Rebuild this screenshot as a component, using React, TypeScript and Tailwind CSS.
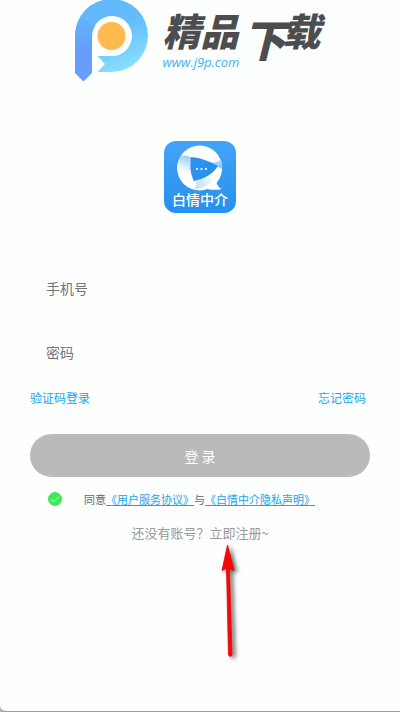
import { useState } from 'react';

function SiteLogo() {
  return (
    <svg className="h-[82px] w-[73px] shrink-0" viewBox="0 0 73 82" aria-hidden="true">
      <defs>
        <linearGradient id="bowl" x1="0.2" y1="0" x2="0.6" y2="1">
          <stop offset="0" stopColor="#5fb6fb" />
          <stop offset="0.45" stopColor="#65bcfb" />
          <stop offset="1" stopColor="#86e0ff" />
        </linearGradient>
        <linearGradient id="stem" x1="0" y1="0" x2="0" y2="1">
          <stop offset="0" stopColor="#62b5fb" />
          <stop offset="0.5" stopColor="#669efa" />
          <stop offset="1" stopColor="#6a9df8" />
        </linearGradient>
      </defs>
      <path
        d="M0 36.5A36.5 36.5 0 1 1 36.5 72H22.5L30 64L22.5 56H36.5A20 20 0 1 0 17 36V40H0Z"
        fill="url(#bowl)"
      />
      <path d="M0 36.5C0 29 2 23 6 17L20 26C18 29 17 32 17 36V73L8.5 81.5L0 73Z" fill="url(#stem)" />
      <circle cx="36.5" cy="36" r="14" fill="#ffb94f" />
    </svg>
  );
}

function SiteHeader() {
  return (
    <header className="flex justify-center gap-3.5 pr-1">
      <SiteLogo />
      <div className="flex items-start pt-2.5 text-[38px] leading-10 font-black text-[#4d4d4f] italic">
        <div className="flex w-20 flex-col gap-1">
          <span>精品</span>
          <a
            href="#site"
            className="font-['Open_Sans',sans-serif] text-[13px] leading-4 font-medium text-[#45b2ee]"
          >
            www.j9p.com
          </a>
        </div>
        <span className="w-10 text-[44px] leading-14">下</span>
        <span>载</span>
      </div>
    </header>
  );
}

function AppIcon() {
  return (
    <div className="mx-auto mt-[59px] flex size-[72px] flex-col items-center rounded-xl bg-linear-to-b from-[#43a3f8] to-[#2590ee]">
      <svg className="h-[50px] w-[72px] shrink-0" viewBox="0 0 72 50" aria-hidden="true">
        <defs>
          <linearGradient id="foldTop" x1="1" y1="0.6" x2="0.1" y2="0">
            <stop offset="0" stopColor="#8fc8fb" />
            <stop offset="0.7" stopColor="#ffffff" />
          </linearGradient>
          <linearGradient id="foldLeft" x1="0.5" y1="0" x2="0.3" y2="1">
            <stop offset="0" stopColor="#9bcffb" />
            <stop offset="0.5" stopColor="#ffffff" />
          </linearGradient>
          <linearGradient id="foldBottom" x1="0" y1="1" x2="0.7" y2="0.3">
            <stop offset="0" stopColor="#b5dcfd" />
            <stop offset="1" stopColor="#ffffff" />
          </linearGradient>
        </defs>
        <circle cx="35.7" cy="27" r="22.5" fill="#fff" />
        <path d="M52 40C53 44 55 47 58 48C52 49.5 46 49 40 47Z" fill="#fff" />
        <path d="M17 15C21 14 25 15 28 17C26 24 27 34 30 40V48C20 46 13 37 13.4 26C13.5 22 15 18 17 15Z" fill="url(#foldLeft)" />
        <path d="M28 16C36 17 43 21 48 21.5C52 21.5 55 20 57 18C58 22 58 25 58 28L54 26Z" fill="url(#foldTop)" />
        <path d="M54 25C50 33 40 38 31 40C33 43 32 46 30 48C45 47 54 37 54 25Z" fill="url(#foldBottom)" />
        <path d="M27 16C38 17 47 21 54 25C49 33 40 38 30 40C26 33 26 24 27 16Z" fill="#2b91ee" />
        <g fill="#fff">
          <circle cx="33" cy="28" r="1.1" />
          <circle cx="37.5" cy="28" r="1.1" />
          <circle cx="42" cy="28" r="1.1" />
        </g>
      </svg>
      <span className="text-sm leading-4 font-medium whitespace-nowrap text-white">白情中介</span>
    </div>
  );
}

function PointerArrow() {
  return (
    <svg
      className="pointer-events-none absolute top-0 left-1/2 ml-4 h-[122px] w-8 overflow-visible drop-shadow-[3px_2px_2px_rgba(0,0,0,0.6)]"
      viewBox="0 0 32 122"
      aria-hidden="true"
    >
      <path
        d="M11.5 2L18 27.5L13.5 25.5L16 112Q14.5 115 12.5 112L10.5 25.5L6 27.5Z"
        fill="#fb0505"
        stroke="#e00808"
        strokeWidth="0.8"
      />
    </svg>
  );
}

export default function App() {
  const [agreed, setAgreed] = useState(true);

  return (
    <div className="bg-[#b5b5b5]">
      <div className="flex min-h-screen flex-col rounded-bl-md border-b border-[#9b9b9b] bg-[#fdfefe] font-['Noto_Sans_CJK_SC',sans-serif]">
        <SiteHeader />

        <main>
          <AppIcon />

          <form className="mt-[55px] px-[30px]" onSubmit={(e) => e.preventDefault()}>
            <input
              type="tel"
              aria-label="手机号"
              placeholder="手机号"
              className="block h-10 w-full bg-transparent px-4 text-sm text-[#333] outline-none placeholder:text-[#74747c]"
            />
            <input
              type="password"
              aria-label="密码"
              placeholder="密码"
              className="mt-6 block h-10 w-full bg-transparent px-4 text-sm text-[#333] outline-none placeholder:text-[#74747c]"
            />

            <div className="mt-4 flex justify-between pr-1 text-xs leading-5 text-[#1ba6ec]">
              <a href="#code-login">验证码登录</a>
              <a href="#forgot">忘记密码</a>
            </div>

            <button
              type="submit"
              className="mt-[26px] block h-[43px] w-full rounded-full bg-[#b9bbba] text-sm text-white"
            >
              登 录
            </button>

            <div className="mt-3 flex items-center gap-[22px] pl-[18px]">
              <span className="relative flex size-3.5 shrink-0">
                <input
                  id="agree"
                  type="checkbox"
                  checked={agreed}
                  onChange={(e) => setAgreed(e.target.checked)}
                  className="size-3.5 appearance-none rounded-full border border-[#bbb] checked:border-[#3eea58] checked:bg-[#3eea58]"
                />
                {agreed && (
                  <svg className="pointer-events-none absolute inset-0 size-3.5" viewBox="0 0 14 14" aria-hidden="true">
                    <path d="M3.3 7L6 9.8L11 4.8" fill="none" stroke="#fff" strokeWidth="1" />
                  </svg>
                )}
              </span>
              <label htmlFor="agree" className="text-[11px] leading-5 whitespace-nowrap text-[#666]">
                同意
                <a href="#terms" className="text-[#1ba6ec] underline">《用户服务协议》</a>
                与
                <a href="#privacy" className="text-[#1ba6ec] underline">《白情中介隐私声明》</a>
              </label>
            </div>
          </form>

          <p className="mt-3.5 text-center text-[13px] leading-5 text-[#999]">
            还没有账号？<a href="#register">立即注册~</a>
          </p>
          <div className="relative">
            <PointerArrow />
          </div>
        </main>
      </div>
    </div>
  );
}
